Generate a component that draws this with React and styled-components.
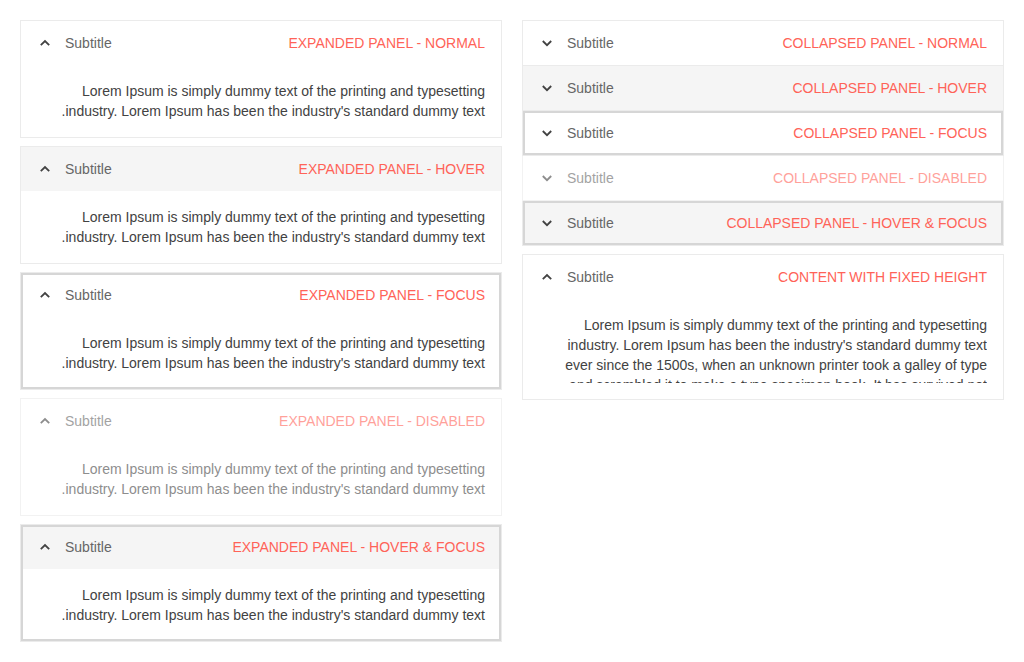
import React from "react";
import styled, { createGlobalStyle, css } from "styled-components";

const Global = createGlobalStyle`
  html, body { margin: 0; padding: 0; background: #ffffff; }
  body { font-family: "Liberation Sans", Arial, sans-serif; font-size: 14px; line-height: 20px; color: #424242; }
`;

const Page = styled.div`
  display: grid;
  grid-template-columns: 482px 482px;
  column-gap: 20px;
  align-items: start;
  padding: 20px;
`;

const Column = styled.div`
  display: flex;
  flex-direction: column;
`;

const Panel = styled.div`
  position: relative;
  direction: rtl;
  background: #ffffff;
  border: 1px solid #ebebeb;
  ${(p) => p.$joined && css`border-top-width: 0;`}
  ${(p) => p.$spaced && css`margin-top: 8px;`}
  ${(p) => p.$disabled && css`opacity: 0.6;`}
  ${(p) =>
    p.$focus &&
    css`
      &::after {
        content: "";
        position: absolute;
        inset: 0;
        box-shadow: inset 0 0 0 2px #d6d6d6;
        pointer-events: none;
      }
    `}
`;

const Header = styled.div`
  display: flex;
  align-items: center;
  height: 44px;
  padding: 0 16px;
  box-sizing: border-box;
  background: ${(p) => (p.$hover ? "#f5f5f5" : "transparent")};
`;

const Title = styled.div`
  color: #ff6358;
  text-transform: uppercase;
  white-space: nowrap;
`;

const Spacer = styled.div`
  flex: 1;
`;

const SubTitle = styled.div`
  color: #666666;
  white-space: nowrap;
`;

const Indicator = styled.span`
  display: inline-flex;
  width: 16px;
  height: 16px;
  margin-inline-start: 12px;
  color: #424242;
`;

const Content = styled.div`
  padding: 16px;
`;

const Text = styled.p`
  margin: 0;
  color: #424242;
  ${(p) => p.$fixed && css`height: 68px; overflow: hidden; padding-inline-end: 16px;`}
`;

const Chevron = ({ up }) => (
  <Indicator>
    <svg width="16" height="16" viewBox="0 0 16 16" fill="none">
      <path
        d={up ? "M3.8 10.2 L8 6 L12.2 10.2" : "M3.8 6 L8 10.2 L12.2 6"}
        stroke="currentColor"
        strokeWidth="1.8"
      />
    </svg>
  </Indicator>
);

const SHORT =
  "Lorem Ipsum is simply dummy text of the printing and typesetting industry. Lorem Ipsum has been the industry's standard dummy text.";
const LONG =
  "Lorem Ipsum is simply dummy text of the printing and typesetting industry. Lorem Ipsum has been the industry's standard dummy text ever since the 1500s, when an unknown printer took a galley of type and scrambled it to make a type specimen book. It has survived not only five centuries, but also the leap into electronic typesetting, remaining essentially unchanged.";

const Expander = ({ title, expanded, hover, focus, disabled, joined, spaced, fixed, text }) => (
  <Panel $focus={focus} $disabled={disabled} $joined={joined} $spaced={spaced}>
    <Header $hover={hover}>
      <Title>{title}</Title>
      <Spacer />
      <SubTitle>Subtitle</SubTitle>
      <Chevron up={expanded} />
    </Header>
    {expanded && (
      <Content>
        <Text $fixed={fixed}>{text}</Text>
      </Content>
    )}
  </Panel>
);

export default function App() {
  return (
    <>
      <Global />
      <Page>
        <Column>
          <Expander expanded title="Expanded panel - normal" text={SHORT} />
          <Expander expanded spaced hover title="Expanded panel - hover" text={SHORT} />
          <Expander expanded spaced focus title="Expanded panel - focus" text={SHORT} />
          <Expander expanded spaced disabled title="Expanded panel - disabled" text={SHORT} />
          <Expander expanded spaced hover focus title="Expanded panel - hover & focus" text={SHORT} />
        </Column>
        <Column>
          <Expander title="Collapsed panel - normal" />
          <Expander joined hover title="Collapsed panel - hover" />
          <Expander joined focus title="Collapsed panel - focus" />
          <Expander joined disabled title="Collapsed panel - disabled" />
          <Expander joined hover focus title="Collapsed panel - hover & focus" />
          <Expander expanded spaced fixed title="Content with fixed height" text={LONG} />
        </Column>
      </Page>
    </>
  );
}
